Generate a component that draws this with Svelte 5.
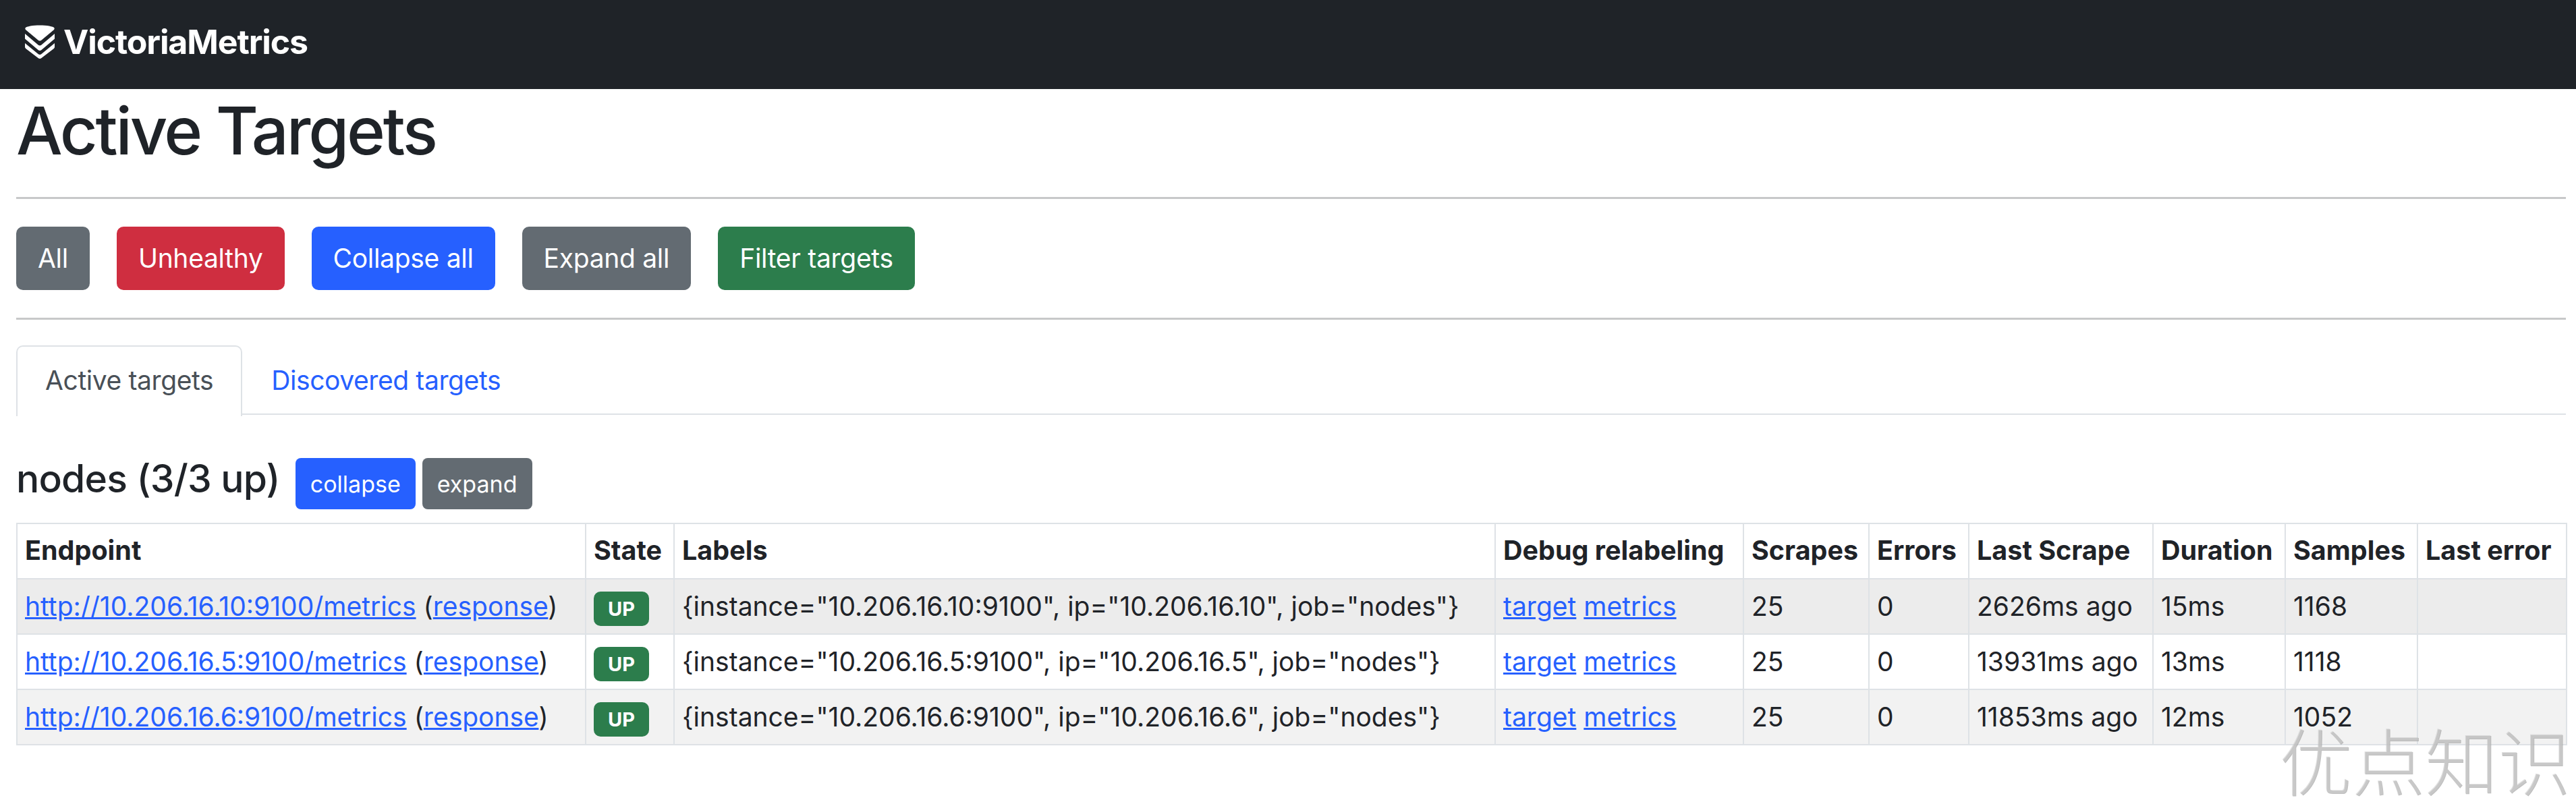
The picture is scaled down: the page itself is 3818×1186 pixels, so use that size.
<script>
  const buttons = [
    { label: 'All', color: 'gray' },
    { label: 'Unhealthy', color: 'red' },
    { label: 'Collapse all', color: 'blue' },
    { label: 'Expand all', color: 'gray' },
    { label: 'Filter targets', color: 'green' }
  ];
  const columns = [
    { title: 'Endpoint', width: 843 },
    { title: 'State', width: 131 },
    { title: 'Labels', width: 1217 },
    { title: 'Debug relabeling', width: 368 },
    { title: 'Scrapes', width: 186 },
    { title: 'Errors', width: 148 },
    { title: 'Last Scrape', width: 273 },
    { title: 'Duration', width: 196 },
    { title: 'Samples', width: 196 },
    { title: 'Last error', width: 221 }
  ];
  const rows = [
    { ip: '10.206.16.10', scrapes: 25, errors: 0, last: '2626ms ago', duration: '15ms', samples: 1168 },
    { ip: '10.206.16.5', scrapes: 25, errors: 0, last: '13931ms ago', duration: '13ms', samples: 1118 },
    { ip: '10.206.16.6', scrapes: 25, errors: 0, last: '11853ms ago', duration: '12ms', samples: 1052 }
  ];
</script>

<nav class="navbar">
  <svg class="logo" viewBox="0 0 44 50" aria-hidden="true">
    <path d="M0.5 4.5C2 2 12 0.5 22 0.5S42 2 43.5 4.5C44 5.5 43.5 6.5 42.5 7.5L24.5 22.5C23 23.7 21 23.7 19.5 22.5L1.5 7.5C0.5 6.5 0 5.5 0.5 4.5Z" fill="#fff"/>
    <path d="M0 13L19.5 29.5C21 30.7 23 30.7 24.5 29.5L44 13V20.5L24.5 37C23 38.2 21 38.2 19.5 37L0 20.5Z" fill="#fff"/>
    <path d="M0 27L19.5 43C21 44.2 23 44.2 24.5 43L44 27V32.5C44 33.5 43.5 34.3 42.5 35.2L24.5 49C23 50.2 21 50.2 19.5 49L1.5 35.2C0.5 34.3 0 33.5 0 32.5Z" fill="#fff"/>
  </svg>
  <span class="brand">VictoriaMetrics</span>
</nav>

<main class="container">
  <h1>Active Targets</h1>
  <hr class="rule-top" />
  <div class="actions">
    {#each buttons as b}
      <button class="btn {b.color}">{b.label}</button>
    {/each}
  </div>
  <hr class="rule-bottom" />

  <ul class="tabs">
    <li class="tab active">Active targets</li>
    <li class="tab">Discovered targets</li>
  </ul>

  <div class="job">
    <h3>nodes (3/3 up)</h3>
    <button class="btn-sm blue">collapse</button>
    <button class="btn-sm gray">expand</button>
  </div>

  <table>
    <colgroup>
      {#each columns as c}
        <col style="width: {c.width}px" />
      {/each}
    </colgroup>
    <thead>
      <tr>
        {#each columns as c}
          <th>{c.title}</th>
        {/each}
      </tr>
    </thead>
    <tbody>
      {#each rows as r}
        <tr>
          <td><a href="#top">http://{r.ip}:9100/metrics</a> (<a href="#top">response</a>)</td>
          <td><span class="badge">UP</span></td>
          <td>{`{instance="${r.ip}:9100", ip="${r.ip}", job="nodes"}`}</td>
          <td><a href="#top">target</a> <a href="#top">metrics</a></td>
          <td>{r.scrapes}</td>
          <td>{r.errors}</td>
          <td>{r.last}</td>
          <td>{r.duration}</td>
          <td>{r.samples}</td>
          <td></td>
        </tr>
      {/each}
    </tbody>
  </table>
</main>

<div class="watermark">优点知识</div>

<style>
  :global(body) {
    margin: 0;
    background: #fff;
    color: #1f2328;
    font-family: Inter, "Noto Sans", sans-serif;
    font-size: 39px;
    line-height: 1.5;
  }
  .navbar {
    height: 132px;
    background: #1f2328;
    display: flex;
    align-items: center;
    padding-left: 37px;
    gap: 13px;
  }
  .logo {
    width: 44px;
    height: 50px;
    margin-top: -8px;
  }
  .brand {
    color: #fff;
    font-size: 50px;
    font-weight: 700;
    letter-spacing: -1.1px;
    margin-top: -8px;
  }
  .container {
    padding: 0 15px 0 24px;
  }
  h1 {
    margin: 4px 0 0;
    font-size: 97px;
    font-weight: 500;
    line-height: 116px;
    letter-spacing: -3.2px;
  }
  hr {
    border: 0;
    height: 3px;
    background: #c7c8c9;
    margin: 0;
  }
  .rule-top {
    margin-top: 40px;
  }
  .actions {
    display: flex;
    gap: 40px;
    margin-top: 41px;
  }
  .btn {
    height: 94px;
    border: 0;
    border-radius: 10px;
    padding: 0 32px;
    font: inherit;
    letter-spacing: -0.3px;
    color: #fff;
  }
  .btn-sm {
    height: 76px;
    border: 0;
    border-radius: 8px;
    padding: 0 22px;
    font: inherit;
    font-size: 34px;
    color: #fff;
  }
  .gray { background: #636b72; }
  .red { background: #cf2e40; }
  .blue { background: #2660ff; }
  .green { background: #2c7d4c; }
  .rule-bottom {
    margin-top: 41px;
  }
  .tabs {
    display: flex;
    list-style: none;
    margin: 38px 0 0;
    padding: 0;
    border-bottom: 2px solid #dee2e6;
    height: 101px;
    letter-spacing: -0.4px;
  }
  .tab {
    padding: 0 41px;
    height: 101px;
    line-height: 100px;
    color: #2660ff;
    border: 2px solid transparent;
    border-bottom: 0;
    margin-bottom: -2px;
  }
  .active {
    color: #495057;
    background: #fff;
    border-color: #dee2e6;
    border-radius: 10px 10px 0 0;
    height: 103px;
  }
  .job {
    display: flex;
    align-items: center;
    gap: 10px;
    margin-top: 64px;
  }
  h3 {
    margin: 0 13px 14px 0;
    font-size: 57px;
    font-weight: 500;
    line-height: 62px;
    letter-spacing: -0.8px;
  }
  table {
    width: 3779px;
    table-layout: fixed;
    border-collapse: collapse;
    margin-top: 20px;
  }
  th, td {
    border: 2px solid #dee2e6;
    height: 82px;
    padding: 0 11px;
    text-align: left;
    vertical-align: middle;
    white-space: nowrap;
    box-sizing: border-box;
  }
  th {
    font-weight: 700;
    font-size: 39.5px;
  }
  tbody tr:nth-child(1) td { background: #ececec; }
  tbody tr:nth-child(3) td { background: #f2f2f2; }
  a {
    color: #2660ff;
  }
  .badge {
    display: inline-block;
    width: 82px;
    height: 51px;
    line-height: 51px;
    text-align: center;
    background: #2c7d4c;
    border-radius: 10px;
    color: #fff;
    font-size: 29px;
    font-weight: 700;
    vertical-align: middle;
  }
  .watermark {
    position: absolute;
    left: 3378px;
    top: 1062px;
    font-family: "Noto Sans CJK SC", sans-serif;
    font-weight: 300;
    font-size: 108px;
    line-height: 124px;
    color: rgba(205, 205, 205, 0.6);
    text-shadow: 1px 1px 0 rgba(150, 150, 150, 0.6);
    white-space: nowrap;
  }
</style>
